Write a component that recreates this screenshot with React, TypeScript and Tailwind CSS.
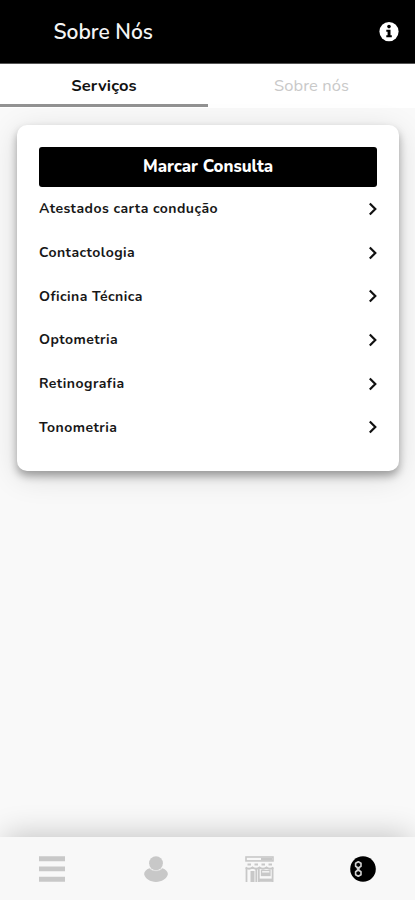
// Services screen: header, tabs, service list card and bottom navigation

const services = [
  'Atestados carta condução',
  'Contactologia',
  'Oficina Técnica',
  'Optometria',
  'Retinografia',
  'Tonometria',
];

function InfoIcon() {
  return (
    <svg width="20" height="20" viewBox="0 0 20 20">
      <circle cx="10" cy="9.6" r="9.6" fill="#fff" />
      <circle cx="10" cy="4.6" r="1.8" fill="#000" />
      <path d="M7.3 7.7h4.2v5.600h1.300v2H7.300v-2h1.300V9.700H7.300z" fill="#000" />
    </svg>
  );
}

function ChevronIcon() {
  return (
    <svg width="9" height="14" viewBox="0 0 9 14" fill="none" stroke="#111" strokeWidth="2.2">
      <path d="M1.8 1.5 7.3 7l-5.5 5.5" />
    </svg>
  );
}

function MenuIcon() {
  return (
    <svg width="26" height="26" viewBox="0 0 26 26" fill="#c8c8c8">
      <path d="M0 .3h26v4.9H0zM0 10.5h26v4.8H0zM0 20.8h26v4.9H0z" />
    </svg>
  );
}

function UserIcon() {
  return (
    <svg width="24" height="26" viewBox="0 0 24 26" fill="#c8c8c8">
      <ellipse cx="12" cy="7.2" rx="6.9" ry="7" />
      <path d="M5.5 12.300c1.700 1.700 3.800 2.500 6.500 2.500s4.800-.8 6.500-2.500c3.300 1.200 5.300 3.300 5.400 6-1.400 4.800-6 7.600-11.900 7.600S1.500 23.100.1 18.300c.1-2.700 2.100-4.800 5.400-6z" />
      <path d="M5.800 12.400c1.500 1.600 3.600 2.400 6.200 2.400s4.700-.8 6.200-2.400" fill="none" stroke="#dedede" strokeWidth=".6" />
    </svg>
  );
}

function StoreIcon() {
  return (
    <svg width="29" height="26" viewBox="0 0 29 26" fill="none" stroke="#c8c8c8">
      <rect x="1" y="1" width="27" height="3.900" strokeWidth="1.600" />
      <path d="M16 3h11" strokeWidth="2.500" />
      <path d="M2.500 8.500h3.500M9.500 8.500h3.500M16.500 8.500h3.500M23.500 8.500h3.500" strokeWidth="2" />
      <path d="M.5 11.500q3.500 2.500 7 0q3.500 2.500 7 0q3.500 2.500 7 0q3.500 2.500 7 0" strokeWidth="2" />
      <path d="M1.500 12v14M11.300 12v14M13.800 12v14M27.600 12v14" strokeWidth="1.800" />
      <path d="M7.500 15v11" strokeWidth="4" />
      <path d="M13 24.200h15" strokeWidth="3.200" />
      <rect x="16.500" y="14.500" width="8.500" height="5" strokeWidth="1.300" />
      <path d="M17 18h8" strokeWidth="3" />
    </svg>
  );
}

function BrandIcon() {
  return (
    <svg width="26" height="26" viewBox="0 0 26 26">
      <circle cx="13" cy="13" r="12.8" fill="#000" />
      <g fill="none" stroke="#d2d2d2" strokeWidth="1.6" strokeLinejoin="round">
        <path d="M8.300 5.700 11 7.300v3L8.300 12 5.600 10.300v-3z" />
        <path d="M8.300 14 11 15.700v3l-2.700 1.600-2.700-1.600v-3z" />
        <path d="M6.500 11.500 10 14.600M10 11.500 6.500 14.600" strokeWidth="1.200" />
      </g>
    </svg>
  );
}

function Header() {
  return (
    <header className="flex h-16 shrink-0 items-center justify-between border-b border-[#555] bg-black pr-4 pl-[53.5px]">
      <h1 className="pt-0.5 text-[21px] font-semibold text-[#f4f4f4]">Sobre Nós</h1>
      <InfoIcon />
    </header>
  );
}

function Tabs() {
  return (
    <div className="flex h-11 shrink-0 bg-white text-[16.5px]">
      <div className="flex w-[208px] flex-col">
        <div className="flex flex-1 items-center justify-center pt-[5px] font-bold tracking-[0.15px] text-[#111]">Serviços</div>
        <div className="mb-px h-[3px] bg-[#929292]" />
      </div>
      <div className="flex flex-1 items-center justify-center tracking-[0.1px] text-[#c9c9c9]">Sobre nós</div>
    </div>
  );
}

function ServicesCard() {
  return (
    <section className="mx-4 mt-[17px] ml-[17px] rounded-[10px] bg-white p-[22px] shadow-[0_5px_9px_rgba(0,0,0,0.33),0_6px_30px_rgba(0,0,0,0.13)]">
      <button className="flex h-10 w-full items-center justify-center rounded-[3px] bg-black text-[16.8px] font-extrabold text-white">
        Marcar Consulta
      </button>
      <ul>
        {services.map((service) => (
          <li
            key={service}
            className="flex h-[43.7px] items-center justify-between text-[14px] font-bold tracking-[0.44px] text-[#171717]"
          >
            {service}
            <ChevronIcon />
          </li>
        ))}
      </ul>
    </section>
  );
}

function BottomNav() {
  return (
    <nav className="grid h-[63px] shrink-0 grid-cols-4 place-items-center bg-[#f8f8f8] shadow-[0_-7px_30px_-5px_rgba(0,0,0,0.22)]">
      <MenuIcon />
      <UserIcon />
      <StoreIcon />
      <BrandIcon />
    </nav>
  );
}

export default function App() {
  return (
    <div className="flex h-screen w-full flex-col overflow-hidden bg-[#f9f9f9] font-['Nunito','Open_Sans',sans-serif]">
      <Header />
      <Tabs />
      <main className="flex-1">
        <ServicesCard />
      </main>
      <BottomNav />
    </div>
  );
}
